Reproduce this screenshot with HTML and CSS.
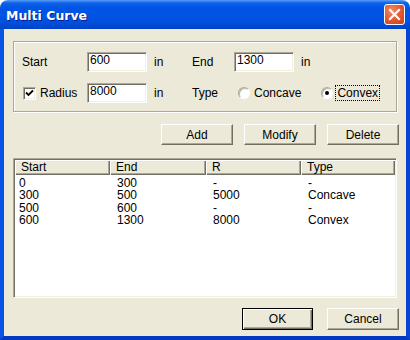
FILE: index.html
```html
<!DOCTYPE html>
<html lang="en">
<head>
  <meta charset="UTF-8">
  <title>Multi Curve</title>
  <link rel="stylesheet" href="styles.css">
</head>
<body>

<div class="window">
  <div class="titlebar">
    <span class="title">Multi Curve</span>
    <span class="close">
      <svg width="19" height="19" viewBox="0 0 19 19"><path d="M5 5 L14 14 M14 5 L5 14" stroke="#fff" stroke-width="2.2" stroke-linecap="square"/></svg>
    </span>
  </div>

  <div class="client">
    <div class="group">
      <div class="row">
        <span class="lbl">Start</span>
        <input class="edit" type="text" value="600">
        <span class="unit">in</span>
        <span class="lbl2">End</span>
        <input class="edit" type="text" value="1300">
        <span class="unit">in</span>
      </div>
      <div class="row">
        <span class="lbl check">
          <span class="box"><svg width="9" height="9" viewBox="0 0 9 9"><path d="M1 3.5 L3.5 6 L8 1.5" stroke="#000" stroke-width="1.8" fill="none"/></svg></span>
          Radius
        </span>
        <input class="edit" type="text" value="8000">
        <span class="unit">in</span>
        <span class="lbl2">Type</span>
        <span class="radio"></span><span class="opt">Concave</span>
        <span class="radio radio-on"></span><span class="opt focus">Convex</span>
      </div>
    </div>

    <div class="actions">
      <button class="btn">Add</button>
      <button class="btn">Modify</button>
      <button class="btn">Delete</button>
    </div>

    <div class="list">
      <div class="list-head">
        <span class="hcell">Start</span>
        <span class="hcell">End</span>
        <span class="hcell">R</span>
        <span class="hcell">Type</span>
      </div>
      <div class="list-body">
        <div class="lrow"><span>0</span><span>300</span><span>-</span><span>-</span></div>
        <div class="lrow"><span>300</span><span>500</span><span>5000</span><span>Concave</span></div>
        <div class="lrow"><span>500</span><span>600</span><span>-</span><span>-</span></div>
        <div class="lrow"><span>600</span><span>1300</span><span>8000</span><span>Convex</span></div>
      </div>
    </div>

    <div class="footer">
      <button class="btn btn-default">OK</button>
      <button class="btn">Cancel</button>
    </div>
  </div>
</div>

</body>
</html>
```

FILE: styles.css
```css
body {
  margin: 0;
  background-color: #ffffff;
  font-family: "Liberation Sans", Arial, sans-serif;
  font-size: 12px;
  color: #000;
}
.window {
  width: 410px;
  height: 340px;
  display: flex;
  flex-direction: column;
  border-radius: 8px 8px 0 0;
  overflow: hidden;
}
.titlebar {
  height: 29px;
  flex: none;
  display: flex;
  align-items: center;
  justify-content: space-between;
  padding: 0 5px 0 6px;
  background: linear-gradient(to bottom, #5a9cf8 0px, #0e62ea 3px, #0055e5 7px, #0054e3 16px, #004fdc 23px, #0046cf 27px, #003ec0 29px);
}
.title {
  font-family: "DejaVu Sans", sans-serif;
  font-weight: bold;
  font-size: 12.5px;
  color: #ffffff;
  text-shadow: 1px 1px 0 #0a1e8a;
  margin-top: 1px;
}
.close {
  width: 19px;
  height: 19px;
  border: 1px solid #ffffff;
  border-radius: 3px;
  background: radial-gradient(circle at 35% 30%, #ef8a6a 0%, #e2552f 55%, #c8421e 100%);
  display: flex;
}
.client {
  flex: 1;
  background-color: #ece9d8;
  border-left: 4px solid #0854e6;
  border-right: 4px solid #0845d2;
  border-bottom: 4px solid #0339c2;
  padding: 12px 9px 0 9px;
}

/* group box */
.group {
  height: 71px;
  box-sizing: border-box;
  border: 1px solid #aca899;
  box-shadow: inset 1px 1px 0 #fff, 1px 1px 0 #fff;
  padding: 10px 0 0 8px;
  display: flex;
  flex-direction: column;
  gap: 11px;
}
.row {
  height: 20px;
  display: flex;
  align-items: center;
}
.lbl {
  width: 65px;
}
.lbl2 {
  width: 42px;
}
.unit {
  width: 45px;
  padding-left: 7px;
  box-sizing: border-box;
}
.edit {
  width: 60px;
  height: 20px;
  box-sizing: border-box;
  margin: 0;
  padding: 0 1px 5px 2px;
  border: 1px solid;
  border-color: #aca899 #fff #fff #aca899;
  box-shadow: inset 1px 1px 0 #716f64, inset -1px -1px 0 #f1efe2;
  font-family: "Liberation Sans", Arial, sans-serif;
  font-size: 12px;
  line-height: 14px;
  background: #fff;
  outline: none;
}
.check {
  display: flex;
  align-items: center;
}
.box {
  width: 13px;
  height: 13px;
  box-sizing: border-box;
  margin: 1px 4px 0 1px;
  border: 1px solid;
  border-color: #aca899 #fff #fff #aca899;
  box-shadow: inset 1px 1px 0 #716f64, inset -1px -1px 0 #f1efe2;
  background: #fff;
  display: flex;
  align-items: center;
  justify-content: center;
}
.radio {
  width: 12px;
  height: 12px;
  box-sizing: border-box;
  border-radius: 50%;
  border: 1px solid;
  border-color: #aca899 #fff #fff #aca899;
  box-shadow: inset 1px 1px 0 #b8b4a4;
  background: #fff;
  margin-left: 4px;
  display: flex;
  align-items: center;
  justify-content: center;
}
.radio-on {
  margin-left: 20px;
}
.radio-on::after {
  content: "";
  width: 4px;
  height: 4px;
  border-radius: 50%;
  background: #000;
}
.opt {
  margin-left: 4px;
}
.focus {
  outline: 1px dotted #000;
  padding: 0 1px;
  margin-left: 3px;
}

/* buttons */
.actions, .footer {
  display: flex;
  justify-content: flex-end;
  margin-right: -2px;
}
.actions {
  margin-top: 12px;
  gap: 11px;
}
.footer {
  margin-top: 10px;
  gap: 14px;
}
.btn {
  width: 72px;
  height: 21px;
  margin: 0;
  padding: 0;
  background: #ece9d8;
  border: 1px solid;
  border-color: #fff #716f64 #716f64 #fff;
  box-shadow: inset -1px -1px 0 #aca899;
  font-family: "Liberation Sans", Arial, sans-serif;
  font-size: 12px;
  color: #000;
}
.footer .btn {
  height: 22px;
}
.btn-default {
  width: 71px;
  border: 1px solid #000;
  box-shadow: inset 1px 1px 0 #fff, inset -1px -1px 0 #716f64, inset -2px -2px 0 #aca899;
}

/* list view */
.list {
  margin-top: 13px;
  height: 140px;
  box-sizing: border-box;
  padding: 1px;
  border: 1px solid;
  border-color: #aca899 #fff #fff #aca899;
  box-shadow: inset 1px 1px 0 #716f64, inset -1px -1px 0 #f1efe2;
  background: #fff;
}
.list-head, .lrow {
  display: grid;
  grid-template-columns: 95px 96px 95px 94px;
}
.list-head {
  height: 15px;
}
.hcell {
  background: #ece9d8;
  box-shadow: inset 1px 1px 0 #fff, inset -1px -1px 0 #716f64, inset -2px -2px 0 #aca899;
  padding: 1px 0 0 6px;
  line-height: 12px;
}
.list-body {
  padding-top: 2px;
}
.lrow {
  line-height: 12.3px;
}
.lrow span {
  padding-left: 7px;
}
.lrow span:first-child {
  padding-left: 4px;
}
```
